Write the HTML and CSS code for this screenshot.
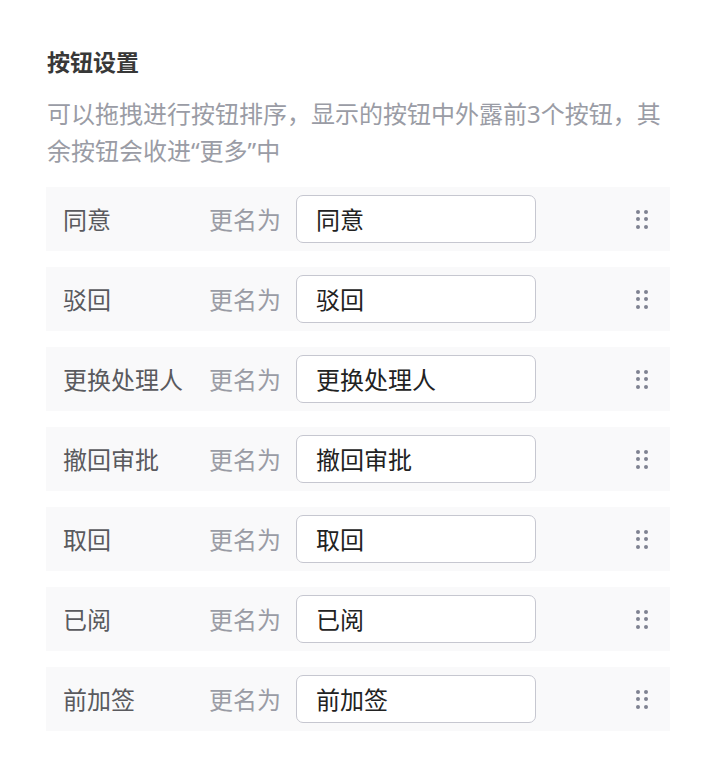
FILE: index.html
```html
<!DOCTYPE html>
<html lang="zh">
<head>
<meta charset="utf-8">
<link rel="stylesheet" href="styles.css">
</head>
<body>
<div class="panel">
  <h2 class="title">按钮设置</h2>
  <p class="desc">可以拖拽进行按钮排序，显示的按钮中外露前3个按钮，其余按钮会收进“更多”中</p>
  <ul class="list">
    <li class="row"><span class="name">同意</span><span class="rename">更名为</span><input class="field" value="同意"><span class="handle"><i></i><i></i><i></i><i></i><i></i><i></i></span></li>
    <li class="row"><span class="name">驳回</span><span class="rename">更名为</span><input class="field" value="驳回"><span class="handle"><i></i><i></i><i></i><i></i><i></i><i></i></span></li>
    <li class="row"><span class="name">更换处理人</span><span class="rename">更名为</span><input class="field" value="更换处理人"><span class="handle"><i></i><i></i><i></i><i></i><i></i><i></i></span></li>
    <li class="row"><span class="name">撤回审批</span><span class="rename">更名为</span><input class="field" value="撤回审批"><span class="handle"><i></i><i></i><i></i><i></i><i></i><i></i></span></li>
    <li class="row"><span class="name">取回</span><span class="rename">更名为</span><input class="field" value="取回"><span class="handle"><i></i><i></i><i></i><i></i><i></i><i></i></span></li>
    <li class="row"><span class="name">已阅</span><span class="rename">更名为</span><input class="field" value="已阅"><span class="handle"><i></i><i></i><i></i><i></i><i></i><i></i></span></li>
    <li class="row"><span class="name">前加签</span><span class="rename">更名为</span><input class="field" value="前加签"><span class="handle"><i></i><i></i><i></i><i></i><i></i><i></i></span></li>
  </ul>
</div>
</body>
</html>
```
FILE: styles.css
```css
* { box-sizing: border-box; }
html, body { margin: 0; padding: 0; background: #fff; }
body {
  font-family: "Noto Sans CJK SC", "Noto Sans", sans-serif;
  font-size: 24px;
}
.panel {
  width: 624px;
  margin-left: 46px;
  padding-top: 43px;
}
.title {
  margin: 0;
  font-size: 23px;
  line-height: 36px;
  font-weight: 700;
  color: #383838;
  padding-left: 1px;
}
.desc {
  margin: 16px 0 0 1px;
  font-family: "Noto Sans", "Noto Sans CJK SC", sans-serif;
  font-size: 24px;
  line-height: 37px;
  color: #9a9ca5;
}
.list {
  list-style: none;
  margin: 18px 0 0;
  padding: 0;
  display: flex;
  flex-direction: column;
  gap: 16px;
}
.row {
  display: flex;
  align-items: center;
  height: 64px;
  padding: 0 0 0 17px;
  background: #f9f9fa;
}
.name {
  width: 146px;
  color: #5a5a5e;
  line-height: 32px;
  white-space: nowrap;
}
.rename {
  width: 87px;
  color: #9a9ca5;
  line-height: 32px;
}
.field {
  width: 240px;
  height: 48px;
  border: 1.5px solid #c6c7d0;
  border-radius: 7px;
  background: #fff;
  padding: 0 0 2px 19px;
  font-family: inherit;
  font-size: 24px;
  color: #222222;
  outline: none;
}
.handle {
  margin-left: 100px;
  display: grid;
  grid-template-columns: 4px 4px;
  column-gap: 4px;
  row-gap: 3.5px;
}
.handle i {
  display: block;
  width: 4px;
  height: 4px;
  border-radius: 50%;
  background: #7f8291;
}
```
